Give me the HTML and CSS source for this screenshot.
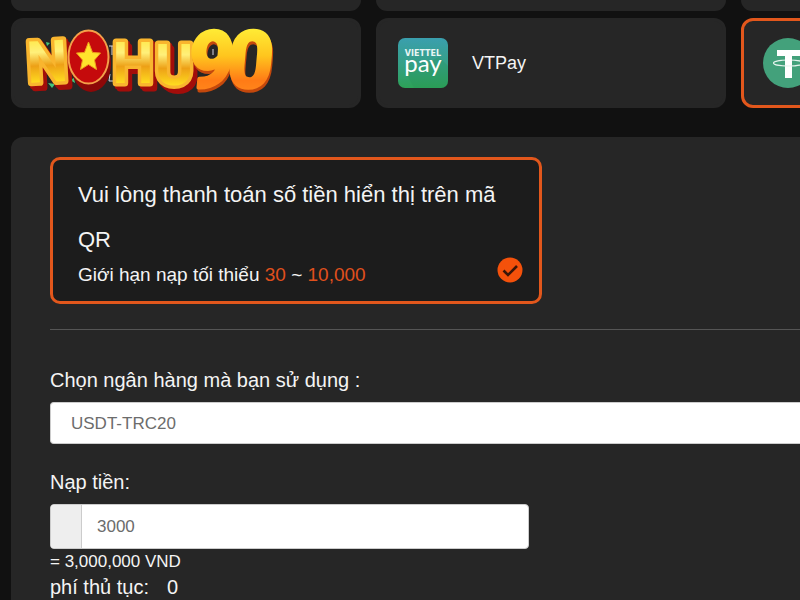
FILE: index.html
```html
<!DOCTYPE html>
<html lang="vi">
<head>
<meta charset="utf-8">
<meta name="viewport" content="width=device-width, initial-scale=1">
<title>Nạp tiền</title>
<link rel="stylesheet" href="styles.css">
</head>
<body>
<main class="page">
  <div class="methods">
    <div class="stub"></div>
    <div class="stub"></div>
    <div class="stub"></div>
    <button type="button" class="method method-brand" aria-label="NOHU90">
      <svg class="logo" width="256" height="80" viewBox="22 22 256 80" aria-hidden="true">
        <defs>
          <linearGradient id="gold" x1="0" y1="0" x2="0" y2="1">
            <stop offset="0.15" stop-color="#ffe94a"/>
            <stop offset="0.35" stop-color="#fff07a"/>
            <stop offset="0.55" stop-color="#eda016"/>
            <stop offset="0.8" stop-color="#ffdc20"/>
          </linearGradient>
          <linearGradient id="fire" x1="0" y1="0" x2="0" y2="1">
            <stop offset="0.15" stop-color="#ffec35"/>
            <stop offset="0.45" stop-color="#ffc51e"/>
            <stop offset="0.72" stop-color="#ff7b16"/>
            <stop offset="0.9" stop-color="#ff8b1e"/>
          </linearGradient>
        </defs>
        <path d="M109 46h5M112 46v9M152 49h4M192 48h3v8M213 49v6M110 74l-1 7h4" fill="none" stroke="#d8d8e4" stroke-width="1"/>
        <path d="M46 42l4 1-3 3zM48 83l7 1-3 4zM70 80l4-2 1 5z" fill="#45c47a"/>
        <g class="logo-letters">
          <text x="47" y="82" text-anchor="middle" transform="rotate(-3 47 60)">N</text>
          <text x="133" y="83" text-anchor="middle">H</text>
          <text x="174" y="85" text-anchor="middle">U</text>
        </g>
        <ellipse cx="91" cy="64" rx="20" ry="28" fill="#8d0808"/>
        <ellipse cx="88.500" cy="57" rx="20" ry="26.500" fill="#c50a0c" stroke="#f3a04a" stroke-width="2"/>
        <path d="M88.500 42l4 10.500 8 .5-6 7 2 9.500-8-5-8 5 2-9.500-6-7 8-.5z" fill="#ffe32c" stroke="#efa21c" stroke-width="1"/>
        <g class="logo-digits">
          <text x="212" y="87" text-anchor="middle" transform="translate(5 0) skewX(-5)">9</text>
          <text x="251" y="87" text-anchor="middle" transform="translate(5 0) skewX(-5)">0</text>
        </g>
      </svg>
    </button>
    <button type="button" class="method">
      <svg class="method-icon" width="50" height="50" viewBox="0 0 50 50" aria-hidden="true">
        <defs>
          <linearGradient id="viettel" x1="0" y1="0" x2="0" y2="1">
            <stop offset="0" stop-color="#3a9fae"/>
            <stop offset="0.55" stop-color="#35a084"/>
            <stop offset="1" stop-color="#2da257"/>
          </linearGradient>
        </defs>
        <rect width="50" height="50" rx="7" fill="url(#viettel)"/>
        <path d="M8 35l8 15h27q7 0 7-7V28l-9-9z" fill="#239052" opacity=".25"/>
        <text class="viettel-small" x="25" y="18" text-anchor="middle">VIETTEL</text>
        <text class="viettel-pay" x="25" y="34" text-anchor="middle">pay</text>
      </svg>
      <span>VTPay</span>
    </button>
    <button type="button" class="method method-active" aria-label="USDT">
      <svg class="method-icon" width="50" height="50" viewBox="0 0 50 50" aria-hidden="true">
        <circle cx="25" cy="25" r="25" fill="#43a17b"/>
        <path d="M14 12h23v6h-8v22h-7V18h-8z" fill="#fff"/>
        <ellipse cx="25.500" cy="25" rx="15" ry="3" fill="none" stroke="#e4f3ed" stroke-width="1.200"/>
        <path d="M22 20h7v7h-7z" fill="#fff"/>
      </svg>
    </button>
  </div>

  <form class="panel">
    <div class="option">
      <div class="option-title">Vui lòng thanh toán số tiền hiển thị trên mã QR</div>
      <div class="option-row">
        <div class="option-limit">Giới hạn nạp tối thiểu <span class="accent">30</span> ~ <span class="accent">10,000</span></div>
        <svg class="check" width="26" height="26" viewBox="0 0 26 26" aria-hidden="true">
          <circle cx="13" cy="13" r="12.500" fill="#f4510b"/>
          <path d="M6.500 13.500l4.500 4.500 9-9" fill="none" stroke="#3a1608" stroke-width="2.600"/>
        </svg>
      </div>
    </div>
    <hr class="rule">
    <label class="label" for="bank">Chọn ngân hàng mà bạn sử dụng&nbsp;:</label>
    <select class="field bank" id="bank"><option>USDT-TRC20</option></select>
    <label class="label" for="amount">Nạp tiền:</label>
    <div class="field amount">
      <span class="addon"></span>
      <input class="amount-input" id="amount" type="text" value="3000">
    </div>
    <div class="converted">= 3,000,000 VND</div>
    <div class="fee"><span>phí thủ tục:</span><span>0</span></div>
  </form>
</main>
</body>
</html>
```
FILE: styles.css
```css
* {
  box-sizing: border-box;
}

body {
  margin: 0;
  background: #111;
  color: #f4f4f4;
  font-family: "Liberation Sans", Arial, sans-serif;
}

.page {
  padding-left: 11px;
  overflow: hidden;
}

.methods {
  display: grid;
  grid-template-columns: repeat(3, 350px);
  gap: 7px 15px;
}

.stub {
  height: 11px;
  background: #262626;
  border-radius: 0 0 12px 12px;
}

.method {
  position: relative;
  display: flex;
  align-items: center;
  gap: 24px;
  height: 90px;
  padding: 0 19px;
  border: 3px solid #262626;
  border-radius: 12px;
  background: #262626;
  color: #f4f4f4;
  font-family: inherit;
  font-size: 18px;
}

.method-active {
  border-color: #e2571c;
}

.method-icon {
  flex: none;
}

.viettel-small {
  fill: #e8f6f4;
  font-family: "DejaVu Sans", sans-serif;
  font-weight: bold;
  font-size: 8px;
}

.viettel-pay {
  fill: #fff;
  font-family: Lato, sans-serif;
  font-size: 24px;
}

.logo {
  position: absolute;
  left: 8px;
  top: 1px;
  overflow: visible;
}

.logo-letters,
.logo-digits {
  font-family: Roboto, sans-serif;
  font-weight: bold;
  stroke-linejoin: round;
  paint-order: stroke;
}

.logo-letters {
  font-size: 58px;
  fill: url(#gold);
  stroke: #f9b52e;
  stroke-width: 7px;
  filter: drop-shadow(2px 3px 0 #a30d0a) drop-shadow(2px 2px 0 #a30d0a);
}

.logo-digits {
  font-size: 78px;
  fill: url(#fire);
  stroke: url(#fire);
  stroke-width: 4px;
  filter: drop-shadow(1px 3px 0 #c4480c);
}

.panel {
  display: flex;
  flex-direction: column;
  align-items: flex-start;
  margin-top: 29px;
  padding: 20px 0 20px 39px;
  border-radius: 12px 0 0 0;
  background: #262626;
}

.option {
  width: 492px;
  padding: 12px 16px 13px 25px;
  border: 3px solid #e2571c;
  border-radius: 10px;
  background: #1c1c1c;
}

.option-title {
  font-size: 22px;
  line-height: 45px;
}

.option-row {
  display: flex;
  justify-content: space-between;
}

.option-limit {
  font-size: 19px;
  line-height: 26px;
}

.accent {
  color: #e0501c;
}

.check {
  flex: none;
  margin-top: -5px;
}

.rule {
  align-self: stretch;
  margin: 25px 0 38px;
  border: 0;
  border-top: 1px solid #555;
}

.label {
  font-size: 20px;
  line-height: 24px;
  margin-bottom: 10px;
}

.field {
  border: 1px solid #ccc;
  border-radius: 4px;
  background: #fff;
  color: #6c6c6c;
  font-family: inherit;
  font-size: 17px;
}

.bank {
  align-self: stretch;
  height: 42px;
  margin-bottom: 26px;
  padding: 0 20px;
  border-right: 0;
  border-radius: 4px 0 0 4px;
  appearance: none;
}

.amount {
  display: flex;
  width: 479px;
  height: 45px;
  overflow: hidden;
}

.addon {
  width: 31px;
  border-right: 1px solid #ccc;
  background: #eee;
}

.amount-input {
  flex: 1;
  min-width: 0;
  padding: 0 15px;
  border: 0;
  background: transparent;
  color: inherit;
  font: inherit;
}

.converted {
  font-size: 17px;
  line-height: 26px;
}

.fee {
  display: flex;
  gap: 18px;
  font-size: 20px;
  line-height: 24px;
}
```
